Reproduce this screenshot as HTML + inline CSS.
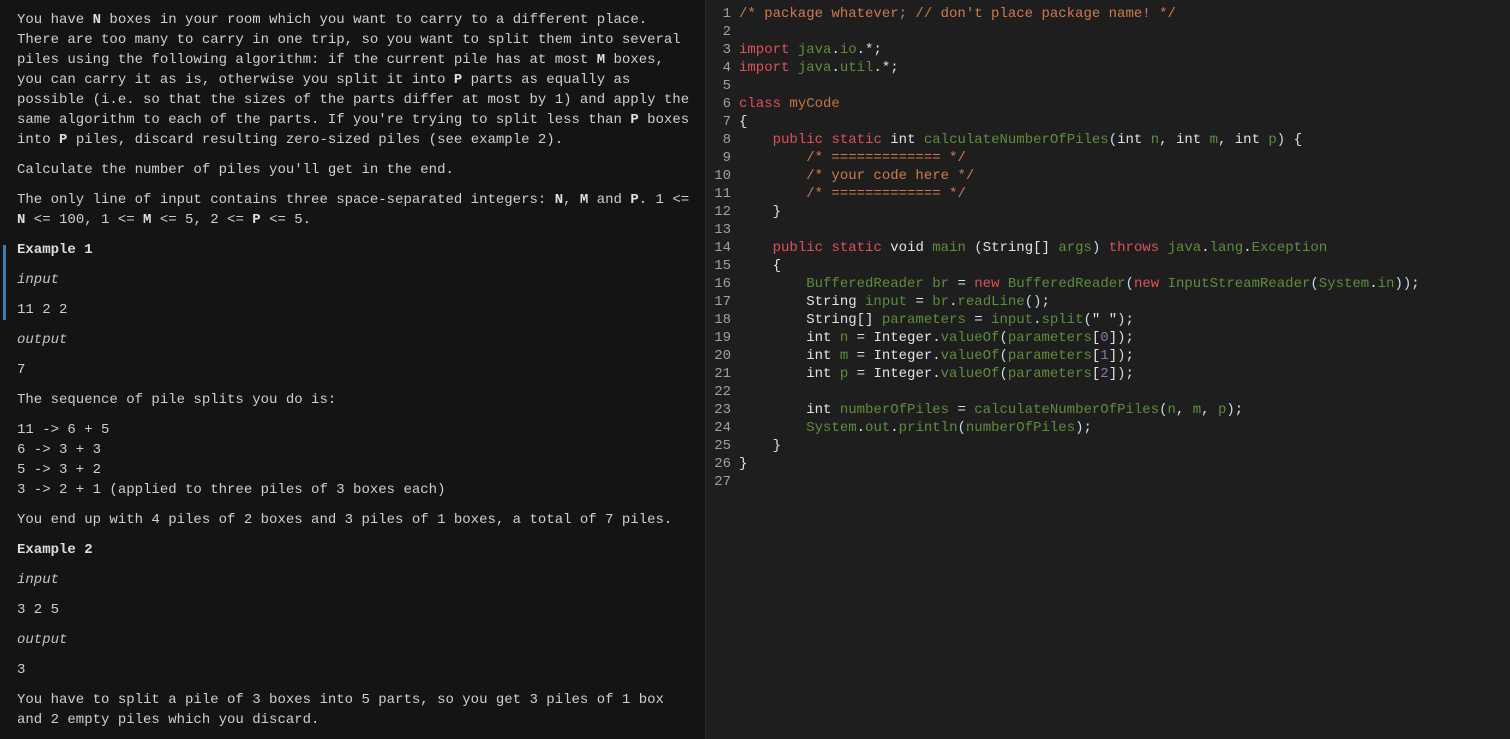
<!DOCTYPE html>
<html><head><meta charset="utf-8"><style>
body{margin:0;width:1510px;height:739px;overflow:hidden;background:#1e1e1e;font-family:"Liberation Mono",monospace;font-size:14px;}
#l{position:absolute;left:0;top:0;width:705px;height:739px;background:#141414;color:#cfcfcf;}
#l p{position:absolute;left:17px;margin:0;line-height:20px;white-space:pre;}
b{font-weight:bold;color:#dedede}
i{color:#c4c4c4}
#bar{position:absolute;left:3px;top:245px;width:3px;height:75px;background:#3d7ab8}
#sep{position:absolute;left:705px;top:0;width:1px;height:739px;background:#2a2a2a}
#c{position:absolute;left:711px;top:5px;line-height:18px;white-space:pre;color:#e2e2e2}
.n{display:inline-block;width:20px;text-align:right;color:#a0a0a0;margin-right:8px}
.c{color:#cf7a4e}.k{color:#e0505a}.g{color:#5f8d3a}.w{color:#eaeaea}.o{color:#c4743c}.p{color:#9c6fae}.b{color:#c6dceb}
</style></head><body>
<div id="l">
<p style="top:10px">You have <b>N</b> boxes in your room which you want to carry to a different place.
There are too many to carry in one trip, so you want to split them into several
piles using the following algorithm: if the current pile has at most <b>M</b> boxes,
you can carry it as is, otherwise you split it into <b>P</b> parts as equally as
possible (i.e. so that the sizes of the parts differ at most by 1) and apply the
same algorithm to each of the parts. If you're trying to split less than <b>P</b> boxes
into <b>P</b> piles, discard resulting zero-sized piles (see example 2).</p>
<p style="top:160px">Calculate the number of piles you'll get in the end.</p>
<p style="top:190px">The only line of input contains three space-separated integers: <b>N</b>, <b>M</b> and <b>P</b>. 1 &lt;=
<b>N</b> &lt;= 100, 1 &lt;= <b>M</b> &lt;= 5, 2 &lt;= <b>P</b> &lt;= 5.</p>
<div id="bar"></div>
<p style="top:240px"><b>Example 1</b></p>
<p style="top:270px"><i>input</i></p>
<p style="top:300px">11 2 2</p>
<p style="top:330px"><i>output</i></p>
<p style="top:360px">7</p>
<p style="top:390px">The sequence of pile splits you do is:</p>
<p style="top:420px">11 -&gt; 6 + 5
6 -&gt; 3 + 3
5 -&gt; 3 + 2
3 -&gt; 2 + 1 (applied to three piles of 3 boxes each)</p>
<p style="top:510px">You end up with 4 piles of 2 boxes and 3 piles of 1 boxes, a total of 7 piles.</p>
<p style="top:540px"><b>Example 2</b></p>
<p style="top:570px"><i>input</i></p>
<p style="top:600px">3 2 5</p>
<p style="top:630px"><i>output</i></p>
<p style="top:660px">3</p>
<p style="top:690px">You have to split a pile of 3 boxes into 5 parts, so you get 3 piles of 1 box
and 2 empty piles which you discard.</p>
</div>
<div id="sep"></div>
<div id="c"><span class="n">1</span><span class="c">/* package whatever; // don't place package name! */</span>
<span class="n">2</span>
<span class="n">3</span><span class="k">import</span> <span class="g">java</span>.<span class="g">io</span>.*;
<span class="n">4</span><span class="k">import</span> <span class="g">java</span>.<span class="g">util</span>.*;
<span class="n">5</span>
<span class="n">6</span><span class="k">class</span> <span class="o">myCode</span>
<span class="n">7</span>{
<span class="n">8</span>    <span class="k">public</span> <span class="k">static</span> int <span class="g">calculateNumberOfPiles</span><span class="b">(</span>int <span class="g">n</span>, int <span class="g">m</span>, int <span class="g">p</span><span class="b">)</span> {
<span class="n">9</span>        <span class="c">/* ============= */</span>
<span class="n">10</span>        <span class="c">/* your code here */</span>
<span class="n">11</span>        <span class="c">/* ============= */</span>
<span class="n">12</span>    }
<span class="n">13</span>
<span class="n">14</span>    <span class="k">public</span> <span class="k">static</span> void <span class="g">main</span> <span class="b">(</span>String[] <span class="g">args</span><span class="b">)</span> <span class="k">throws</span> <span class="g">java</span>.<span class="g">lang</span>.<span class="g">Exception</span>
<span class="n">15</span>    {
<span class="n">16</span>        <span class="g">BufferedReader</span> <span class="g">br</span> = <span class="k">new</span> <span class="g">BufferedReader</span><span class="b">(</span><span class="k">new</span> <span class="g">InputStreamReader</span><span class="b">(</span><span class="g">System</span>.<span class="g">in</span><span class="b">))</span>;
<span class="n">17</span>        String <span class="g">input</span> = <span class="g">br</span>.<span class="g">readLine</span><span class="b">()</span>;
<span class="n">18</span>        String[] <span class="g">parameters</span> = <span class="g">input</span>.<span class="g">split</span><span class="b">(</span>" "<span class="b">)</span>;
<span class="n">19</span>        int <span class="g">n</span> = Integer.<span class="g">valueOf</span><span class="b">(</span><span class="g">parameters</span>[<span class="p">0</span>]<span class="b">)</span>;
<span class="n">20</span>        int <span class="g">m</span> = Integer.<span class="g">valueOf</span><span class="b">(</span><span class="g">parameters</span>[<span class="p">1</span>]<span class="b">)</span>;
<span class="n">21</span>        int <span class="g">p</span> = Integer.<span class="g">valueOf</span><span class="b">(</span><span class="g">parameters</span>[<span class="p">2</span>]<span class="b">)</span>;
<span class="n">22</span>
<span class="n">23</span>        int <span class="g">numberOfPiles</span> = <span class="g">calculateNumberOfPiles</span><span class="b">(</span><span class="g">n</span>, <span class="g">m</span>, <span class="g">p</span><span class="b">)</span>;
<span class="n">24</span>        <span class="g">System</span>.<span class="g">out</span>.<span class="g">println</span><span class="b">(</span><span class="g">numberOfPiles</span><span class="b">)</span>;
<span class="n">25</span>    }
<span class="n">26</span>}
<span class="n">27</span></div>
</body></html>
